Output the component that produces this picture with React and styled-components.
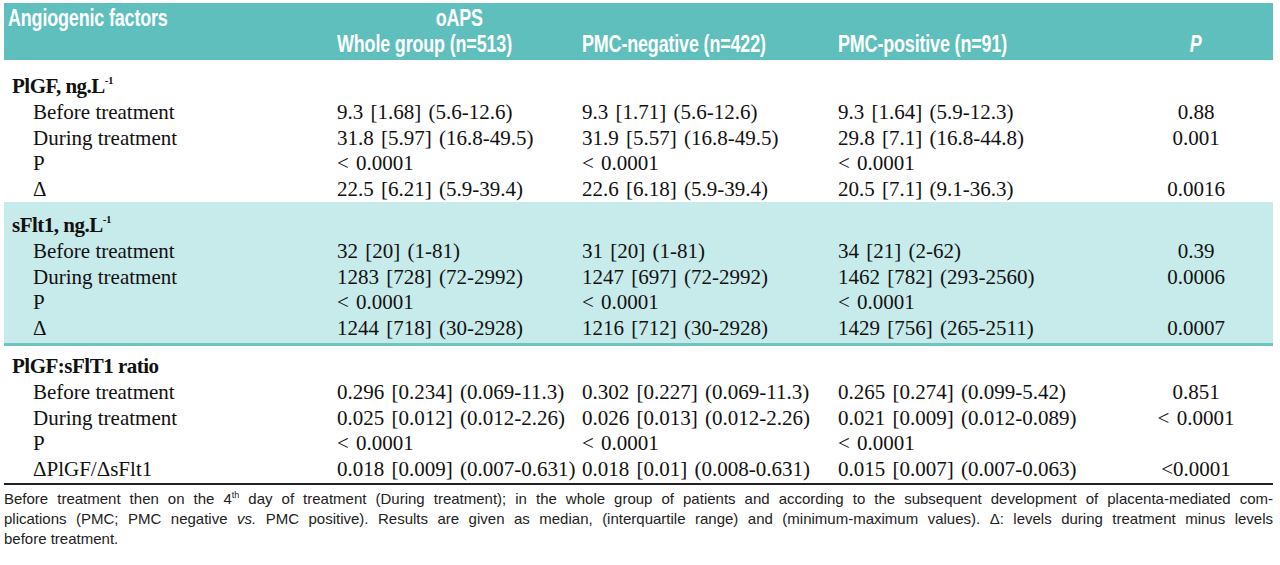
import React from 'react';
import styled, { createGlobalStyle } from 'styled-components';

const GlobalStyle = createGlobalStyle`
  html, body {
    margin: 0;
    padding: 0;
    background: #fff;
  }
`;

const sections = [
  {
    title: 'PlGF, ng.L',
    sup: '-1',
    rows: [
      ['Before treatment', '9.3 [1.68] (5.6-12.6)', '9.3 [1.71] (5.6-12.6)', '9.3 [1.64] (5.9-12.3)', '0.88'],
      ['During treatment', '31.8 [5.97] (16.8-49.5)', '31.9 [5.57] (16.8-49.5)', '29.8 [7.1] (16.8-44.8)', '0.001'],
      ['P', '< 0.0001', '< 0.0001', '< 0.0001', ''],
      ['Δ', '22.5 [6.21] (5.9-39.4)', '22.6 [6.18] (5.9-39.4)', '20.5 [7.1] (9.1-36.3)', '0.0016']
    ]
  },
  {
    title: 'sFlt1, ng.L',
    sup: '-1',
    shaded: true,
    rows: [
      ['Before treatment', '32 [20] (1-81)', '31 [20] (1-81)', '34 [21] (2-62)', '0.39'],
      ['During treatment', '1283 [728] (72-2992)', '1247 [697] (72-2992)', '1462 [782] (293-2560)', '0.0006'],
      ['P', '< 0.0001', '< 0.0001', '< 0.0001', ''],
      ['Δ', '1244 [718] (30-2928)', '1216 [712] (30-2928)', '1429 [756] (265-2511)', '0.0007']
    ]
  },
  {
    title: 'PlGF:sFlT1 ratio',
    rows: [
      ['Before treatment', '0.296 [0.234] (0.069-11.3)', '0.302 [0.227] (0.069-11.3)', '0.265 [0.274] (0.099-5.42)', '0.851'],
      ['During treatment', '0.025 [0.012] (0.012-2.26)', '0.026 [0.013] (0.012-2.26)', '0.021 [0.009] (0.012-0.089)', '< 0.0001'],
      ['P', '< 0.0001', '< 0.0001', '< 0.0001', ''],
      ['ΔPlGF/ΔsFlt1', '0.018 [0.009] (0.007-0.631)', '0.018 [0.01] (0.008-0.631)', '0.015 [0.007] (0.007-0.063)', '<0.0001']
    ]
  }
];

const App = () => (
  <>
    <GlobalStyle />
    <Page>
      <Header>
        <HeadRow>
          <HeadCell><Narrow>Angiogenic factors</Narrow></HeadCell>
          <HeadCell center><Narrow center>oAPS</Narrow></HeadCell>
        </HeadRow>
        <HeadRow>
          <HeadCell />
          <HeadCell><Narrow>Whole group (n=513)</Narrow></HeadCell>
          <HeadCell><Narrow>PMC-negative (n=422)</Narrow></HeadCell>
          <HeadCell><Narrow>PMC-positive (n=91)</Narrow></HeadCell>
          <HeadCell center italic><Narrow center>P</Narrow></HeadCell>
        </HeadRow>
      </Header>

      {sections.map((section, i) => (
        <Section key={i} shaded={section.shaded} first={i === 0}>
          <SectionTitle>
            {section.title}
            {section.sup && <Sup>{section.sup}</Sup>}
          </SectionTitle>
          {section.rows.map((row, j) => (
            <Row key={j}>
              <Label>{row[0]}</Label>
              <Value>{row[1]}</Value>
              <Value>{row[2]}</Value>
              <Value>{row[3]}</Value>
              <Value center>{row[4]}</Value>
            </Row>
          ))}
        </Section>
      ))}

      <Footnote>
        <NoteLine justified>
          Before treatment then on the 4<NoteSup>th</NoteSup> day of treatment (During treatment); in the whole group of patients and according to the subsequent development of placenta-mediated com-
        </NoteLine>
        <NoteLine justified>
          plications (PMC; PMC negative <em>vs.</em> PMC positive). Results are given as median, (interquartile range) and (minimum-maximum values). Δ: levels during treatment minus levels
        </NoteLine>
        <NoteLine>before treatment.</NoteLine>
      </Footnote>
    </Page>
  </>
);

export default App;

const columns = '333px 245px 256px 301px 114px';

const Page = styled.div`
  width: 1269px;
  margin: 3px 0 0 4px;
`;

const Header = styled.div`
  background: #5ebfbd;
  height: 57px;
  padding-top: 2px;
  box-sizing: border-box;
`;

const HeadRow = styled.div`
  display: grid;
  grid-template-columns: ${columns};
  height: 26px;
  align-items: center;
`;

const HeadCell = styled.div`
  font-family: 'Liberation Sans', Arial, sans-serif;
  font-weight: bold;
  font-size: 23px;
  color: #fff;
  white-space: nowrap;
  text-align: ${props => (props.center ? 'center' : 'left')};
  font-style: ${props => (props.italic ? 'italic' : 'normal')};

  &:first-child {
    padding-left: 4px;
  }
`;

const Narrow = styled.span`
  display: inline-block;
  transform: scaleX(0.78);
  transform-origin: ${props => (props.center ? 'center' : 'left')};
  letter-spacing: -0.2px;
`;

const Section = styled.div`
  background: ${props => (props.shaded ? '#c7eaea' : 'transparent')};
  border-bottom: ${props => (props.shaded ? '3px solid #6cc4c3' : 'none')};
  padding: ${props => (props.first ? '13px 0 0' : props.shaded ? '10px 0 2px' : '7px 0 0')};
`;

const SectionTitle = styled.div`
  font-family: 'Liberation Serif', serif;
  font-weight: bold;
  font-size: 21px;
  height: 27px;
  line-height: 27px;
  padding-left: 8px;
  letter-spacing: -0.5px;
  color: #111;
`;

const Sup = styled.sup`
  font-size: 11px;
  vertical-align: 9px;
  line-height: 0;
`;

const Row = styled.div`
  display: grid;
  grid-template-columns: ${columns};
  height: 25.5px;
  align-items: center;
  font-family: 'Liberation Serif', serif;
  font-size: 21px;
  word-spacing: 2px;
  color: #111;
`;

const Label = styled.div`
  padding-left: 29px;
  white-space: nowrap;
  word-spacing: 0;
`;

const Value = styled.div`
  white-space: nowrap;
  text-align: ${props => (props.center ? 'center' : 'left')};
`;

const Footnote = styled.div`
  border-top: 2px solid #222;
  margin-top: 1px;
  padding-top: 4px;
  font-family: 'Liberation Sans', sans-serif;
  font-size: 15px;
  line-height: 20px;
  color: #222;
`;

const NoteLine = styled.div`
  white-space: normal;
  text-align: ${props => (props.justified ? 'justify' : 'left')};
  text-align-last: ${props => (props.justified ? 'justify' : 'left')};
`;

const NoteSup = styled.sup`
  font-size: 9px;
  vertical-align: 6px;
  line-height: 0;
`;
